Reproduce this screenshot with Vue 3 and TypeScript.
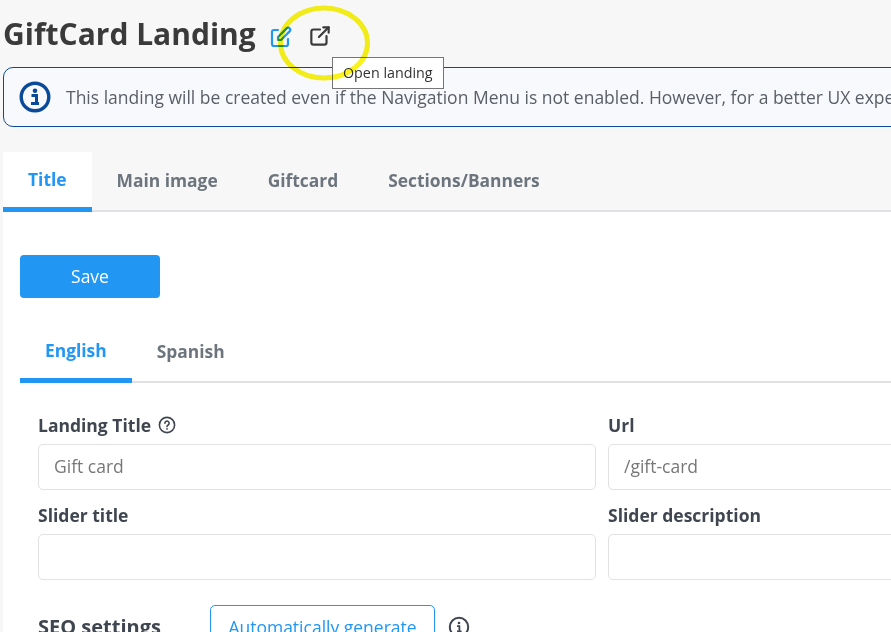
<script setup lang="ts">
const tabs = ['Title', 'Main image', 'Giftcard', 'Sections/Banners']
const languages = ['English', 'Spanish']
</script>

<template>
  <div class="page">
    <header class="heading">
      <h1>GiftCard Landing</h1>
      <svg class="edit" viewBox="0 0 24 24" width="24" height="24" fill="none" stroke="#2196f3" stroke-width="2.2" stroke-linecap="round" stroke-linejoin="round">
        <path d="M9 5H5a2 2 0 0 0-2 2v12a2 2 0 0 0 2 2h12a2 2 0 0 0 2-2v-5" />
        <path d="M20.6 6.4a2 2 0 0 0-3-3L9 12v3h3z" />
      </svg>
      <svg class="external" viewBox="0 0 24 24" width="26" height="26" fill="none" stroke="#3a3a3a" stroke-width="2" stroke-linecap="round" stroke-linejoin="round">
        <path d="M12 6H6a2 2 0 0 0-2 2v10a2 2 0 0 0 2 2h10a2 2 0 0 0 2-2v-6" />
        <path d="M11 13l9-9" />
        <path d="M15 4h5v5" />
      </svg>
    </header>

    <div class="alert">
      <svg viewBox="0 0 32 32" width="32" height="32" fill="none">
        <circle cx="16" cy="16" r="13.8" stroke="#0b4a9a" stroke-width="3.4" />
        <circle cx="16" cy="9.8" r="2.3" fill="#0b4a9a" />
        <path d="M12.5 14.6h5v7.4M12 22.4h8" stroke="#0b4a9a" stroke-width="3" />
      </svg>
      <span>This landing will be created even if the Navigation Menu is not enabled. However, for a better UX experience we recommend enabling it.</span>
    </div>

    <nav class="tabs main-tabs">
      <a v-for="(tab, i) in tabs" :key="tab" :class="{ active: i === 0 }">{{ tab }}</a>
    </nav>

    <section class="panel">
      <button class="save">Save</button>

      <nav class="tabs lang-tabs">
        <a v-for="(lang, i) in languages" :key="lang" :class="{ active: i === 0 }">{{ lang }}</a>
      </nav>

      <div class="fields">
        <label class="field">
          <span class="label">Landing Title
            <svg viewBox="0 0 18 18" width="18" height="18" fill="none" stroke="#3f4650" stroke-width="1.6">
              <circle cx="9" cy="9" r="7.6" />
              <path d="M6.9 7.2a2.1 2.1 0 1 1 3.2 1.8c-.7.4-1.1.8-1.1 1.6" stroke-linecap="round" />
              <circle cx="9" cy="12.9" r=".6" fill="#3f4650" stroke-width=".6" />
            </svg>
          </span>
          <input placeholder="Gift card" />
        </label>
        <label class="field">
          <span class="label">Url</span>
          <input placeholder="/gift-card" />
        </label>
        <label class="field">
          <span class="label">Slider title</span>
          <input />
        </label>
        <label class="field">
          <span class="label">Slider description</span>
          <input />
        </label>
      </div>

      <div class="seo">
        <h2>SEO settings</h2>
        <button class="generate">Automatically generate</button>
        <svg viewBox="0 0 22 22" width="22" height="22" fill="none" stroke="#3f4650">
          <circle cx="11" cy="11" r="9.2" stroke-width="2" />
          <circle cx="11" cy="7" r="1.3" fill="#3f4650" stroke="none" />
          <path d="M9 10.2h2.4v5M9 15.4h4.6" stroke-width="1.8" />
        </svg>
      </div>
    </section>

    <div class="tooltip">Open landing</div>
    <svg class="marker" viewBox="0 0 94 80" width="94" height="80" fill="none">
      <ellipse cx="47" cy="40" rx="43.5" ry="35" stroke="#f9f31a" stroke-width="5" />
    </svg>
  </div>
</template>

<style>
html,
body {
  margin: 0;
  overflow: hidden;
  background: #f7f7f7;
}
</style>

<style scoped>
.page {
  position: relative;
  width: 891px;
  height: 632px;
  overflow: hidden;
  padding-left: 3px;
  box-sizing: border-box;
  font-family: "Open Sans", sans-serif;
  background: #f7f7f7;
  color: #3f4650;
}

.heading {
  display: flex;
  align-items: center;
  height: 67px;
}

h1 {
  margin: 0 13px 0 0;
  font-size: 30px;
  font-weight: 700;
  color: #3a3a3a;
  white-space: nowrap;
}

.edit {
  margin-top: 6px;
}

.external {
  margin: 5px 0 0 14px;
}

.alert {
  display: flex;
  align-items: center;
  gap: 15px;
  box-sizing: border-box;
  width: 1200px;
  height: 60px;
  padding-left: 15px;
  border: 1px solid #0b4a9a;
  border-radius: 10px;
  background: #f8f9fd;
  font-size: 17.5px;
  color: #5a5f66;
  white-space: nowrap;
}

.tabs {
  display: flex;
  font-weight: 700;
  font-size: 17.4px;
  box-shadow: inset 0 -2px 0 #dee2e6;
}

.tabs a {
  box-sizing: border-box;
  height: 60px;
  padding: 16px 25px 0;
  color: #6c757d;
  white-space: nowrap;
}

.tabs a.active {
  padding-top: 15px;
  color: #2196f3;
  border-bottom: 5px solid #2196f3;
}

.main-tabs {
  margin-top: 25px;
  height: 60px;
}

.main-tabs a.active {
  background: #fff;
}

.panel {
  height: 420px;
  padding: 43px 0 0 17px;
  background: #fff;
}

.save {
  display: block;
  width: 140px;
  height: 43px;
  padding: 0 0 2px;
  border: 0;
  border-radius: 4px;
  background: #2196f3;
  color: #fff;
  font: 400 17.5px "Open Sans", sans-serif;
}

.lang-tabs {
  margin-top: 25px;
  height: 60px;
}

.fields {
  display: grid;
  grid-template-columns: 558px 558px;
  column-gap: 12px;
  row-gap: 6px;
  margin: 23px 0 0 18px;
}

.field {
  display: flex;
  flex-direction: column;
}

.label {
  display: flex;
  align-items: center;
  gap: 7px;
  height: 38px;
  font-size: 17.5px;
  font-weight: 700;
}

input {
  box-sizing: border-box;
  height: 46px;
  padding: 0 15px 2px;
  border: 1px solid #e2e2e2;
  border-radius: 5px;
  background: #fff;
  font: 400 17.5px "Open Sans", sans-serif;
}

input::placeholder {
  color: #777;
  opacity: 1;
}

.seo {
  display: flex;
  align-items: center;
  margin: 25px 0 0 18px;
}

h2 {
  width: 172px;
  margin: 0;
  font-size: 20px;
  font-weight: 700;
  white-space: nowrap;
}

.generate {
  box-sizing: border-box;
  width: 225px;
  height: 43px;
  margin-right: 13px;
  border: 1px solid #2196f3;
  border-radius: 5px;
  background: #fff;
  color: #2196f3;
  font: 400 17.5px "Open Sans", sans-serif;
}

.marker {
  position: absolute;
  left: 277px;
  top: 3px;
  mix-blend-mode: multiply;
}

.tooltip {
  position: absolute;
  left: 332px;
  top: 57px;
  box-sizing: border-box;
  width: 112px;
  height: 32px;
  padding-left: 10px;
  border: 1px solid #767676;
  background: #fff;
  color: #333;
  font-size: 14.3px;
  line-height: 30px;
}
</style>
